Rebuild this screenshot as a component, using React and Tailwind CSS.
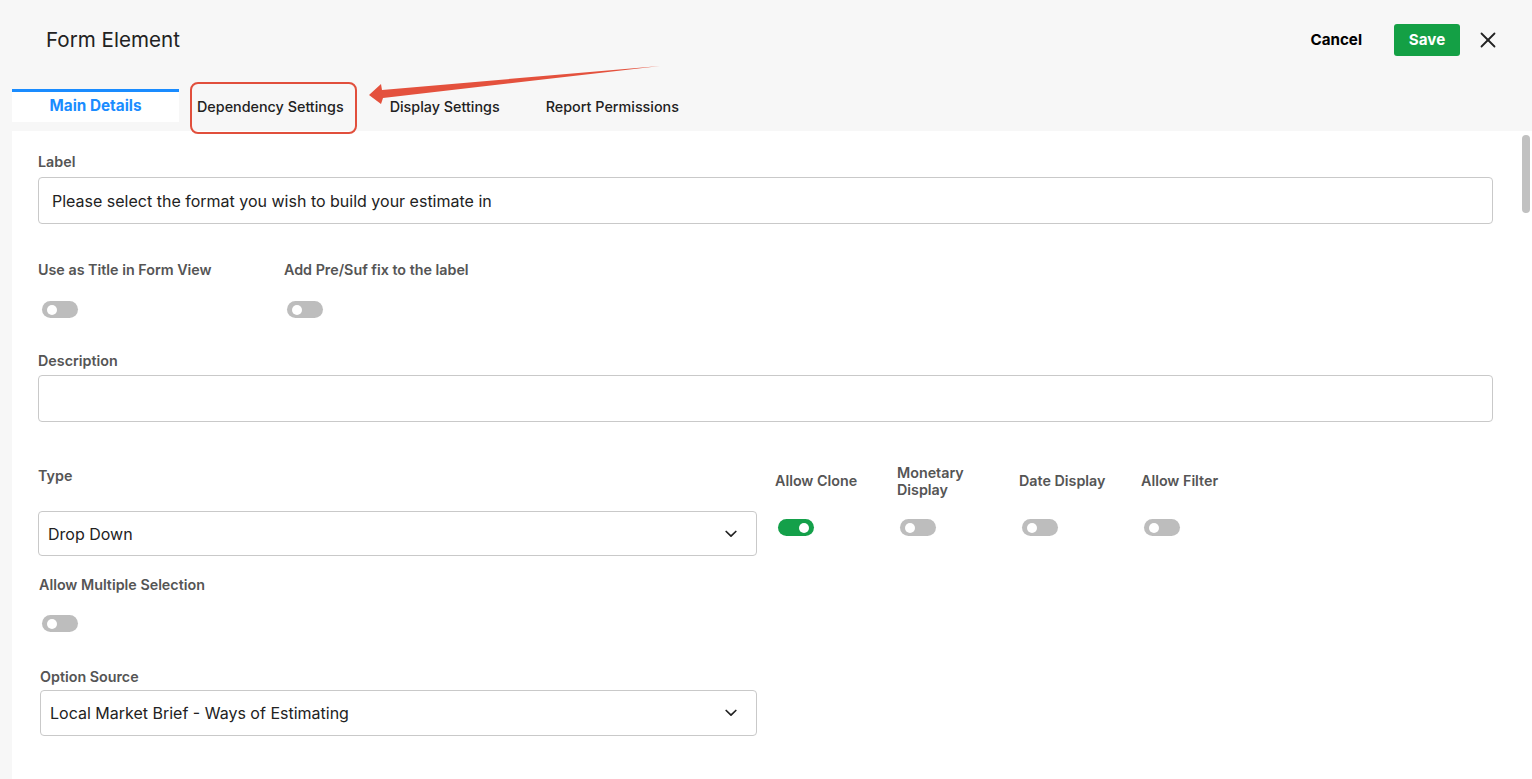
import React from "react";

function Toggle({ on = false }) {
  return (
    <div
      className={
        "relative w-[36px] h-[17px] rounded-full " +
        (on ? "bg-[#14a04a]" : "bg-[#bdbdbd]")
      }
    >
      <div
        className={
          "absolute top-[3.5px] w-[10px] h-[10px] rounded-full bg-white " +
          (on ? "right-[5px]" : "left-[5px]")
        }
      />
    </div>
  );
}

function Chevron() {
  return (
    <svg width="12" height="8" viewBox="0 0 12 8" fill="none">
      <polyline
        points="1.2,1.5 6,6.2 10.8,1.5"
        stroke="#222"
        strokeWidth="1.7"
        strokeLinecap="round"
        strokeLinejoin="round"
      />
    </svg>
  );
}

function FieldLabel({ children, className = "" }) {
  return (
    <div className={"text-[14.3px] leading-[16px] font-semibold text-[#555] " + className}>
      {children}
    </div>
  );
}

export default function App() {
  return (
    <div
      className="relative w-[1532px] h-[779px] overflow-hidden bg-[#f7f7f7] flex flex-col"
      style={{ fontFamily: "Inter, 'Noto Sans', sans-serif" }}
    >
      {/* Title row */}
      <div className="flex items-center h-[79px] pl-[46px] pr-[36px]">
        <div className="text-[20.6px] text-[#222] mt-[1px]">Form Element</div>
        <div className="ml-auto flex items-center mt-[1px]">
          <button className="text-[15.2px] font-bold text-black">Cancel</button>
          <button className="ml-[32px] w-[66px] h-[32px] rounded-[3px] bg-[#14a045] text-white text-[15.2px] font-bold">
            Save
          </button>
          <button className="ml-[20px] w-[16px] h-[16px] flex items-center justify-center">
            <svg width="16" height="16" viewBox="0 0 16 16" fill="none">
              <line x1="1.5" y1="1.5" x2="14.5" y2="14.5" stroke="#222" strokeWidth="1.8" strokeLinecap="round" />
              <line x1="14.5" y1="1.5" x2="1.5" y2="14.5" stroke="#222" strokeWidth="1.8" strokeLinecap="round" />
            </svg>
          </button>
        </div>
      </div>

      {/* Tabs */}
      <div className="flex items-stretch h-[33px] mt-[10px] pl-[12px]">
        <div className="w-[167px] bg-white border-t-[3px] border-[#1a8cff] flex items-center justify-center text-[15.3px] font-bold text-[#1a8cff] pb-[1px]">
          Main Details
        </div>
        <div className="ml-[18px] flex items-center text-[14.35px] font-medium text-[#222] pt-[2px]">
          Dependency Settings
        </div>
        <div className="ml-[46px] flex items-center text-[14.35px] font-medium text-[#222] pt-[2px]">
          Display Settings
        </div>
        <div className="ml-[46px] flex items-center text-[14.35px] font-medium text-[#222] pt-[2px]">
          Report Permissions
        </div>
      </div>

      {/* Content */}
      <div className="mt-[9px] ml-[12px] flex-1 bg-white flex">
        <div className="flex-1 pl-[26px] pr-[23px] flex flex-col pt-[23px]">
          <FieldLabel>Label</FieldLabel>
          <div className="mt-[7px] h-[47px] border border-[#c9c9c9] rounded-[4px] flex items-center px-[13px] text-[16px] text-[#222]">
            Please select the format you wish to build your estimate in
          </div>

          <div className="mt-[38px] flex">
            <div className="w-[246px]">
              <FieldLabel>Use as Title in Form View</FieldLabel>
              <div className="mt-[23px] ml-[4px]">
                <Toggle />
              </div>
            </div>
            <div>
              <FieldLabel>Add Pre/Suf fix to the label</FieldLabel>
              <div className="mt-[23px] ml-[3px]">
                <Toggle />
              </div>
            </div>
          </div>

          <FieldLabel className="mt-[35px]">Description</FieldLabel>
          <div className="mt-[6px] h-[47px] border border-[#c9c9c9] rounded-[4px]" />

          <div className="mt-[42px] flex">
            <div className="w-[719px]">
              <FieldLabel className="mt-[4px]">Type</FieldLabel>
              <div className="mt-[27px] h-[45px] border border-[#c9c9c9] rounded-[4px] flex items-center pl-[9px] pr-[19px] text-[16px] text-[#222]">
                <span>Drop Down</span>
                <span className="ml-auto">
                  <Chevron />
                </span>
              </div>
            </div>
            <div className="ml-[18px] flex">
              {[
                { l: "Allow Clone", on: true },
                { l: "Monetary Display", on: false, w: true },
                { l: "Date Display", on: false },
                { l: "Allow Filter", on: false },
              ].map((t, i) => (
                <div key={i} className="w-[122px]">
                  <div className="h-[34px] flex items-center">
                    <FieldLabel className={t.w ? "w-[80px] leading-[17px]" : ""}>{t.l}</FieldLabel>
                  </div>
                  <div className="mt-[21px] ml-[3px]">
                    <Toggle on={t.on} />
                  </div>
                </div>
              ))}
            </div>
          </div>

          <FieldLabel className="mt-[21px] ml-[1px]">Allow Multiple Selection</FieldLabel>
          <div className="mt-[22px] ml-[4px]">
            <Toggle />
          </div>

          <FieldLabel className="mt-[37px] ml-[2px]">Option Source</FieldLabel>
          <div className="mt-[5px] ml-[2px] w-[717px] h-[46px] border border-[#c9c9c9] rounded-[4px] flex items-center pl-[9px] pr-[19px] text-[16px] text-[#222]">
            <span>Local Market Brief - Ways of Estimating</span>
            <span className="ml-auto">
              <Chevron />
            </span>
          </div>
        </div>
        {/* scrollbar */}
        <div className="w-[16px] shrink-0">
          <div className="mt-[4px] ml-[6px] w-[8px] h-[78px] rounded-full bg-[#c1c1c1]" />
        </div>
      </div>

      {/* Annotation: red box + arrow */}
      <div className="absolute left-[190px] top-[82px] w-[167px] h-[52px] border-2 border-[#e14f3c] rounded-[8px] pointer-events-none" />
      <svg
        className="absolute left-0 top-0 pointer-events-none"
        width="700"
        height="140"
        viewBox="0 0 700 140"
      >
        <polygon
          points="369,95 381,84 382,90 660,66 383,98 381,104"
          fill="#e4513d"
        />
      </svg>
    </div>
  );
}
